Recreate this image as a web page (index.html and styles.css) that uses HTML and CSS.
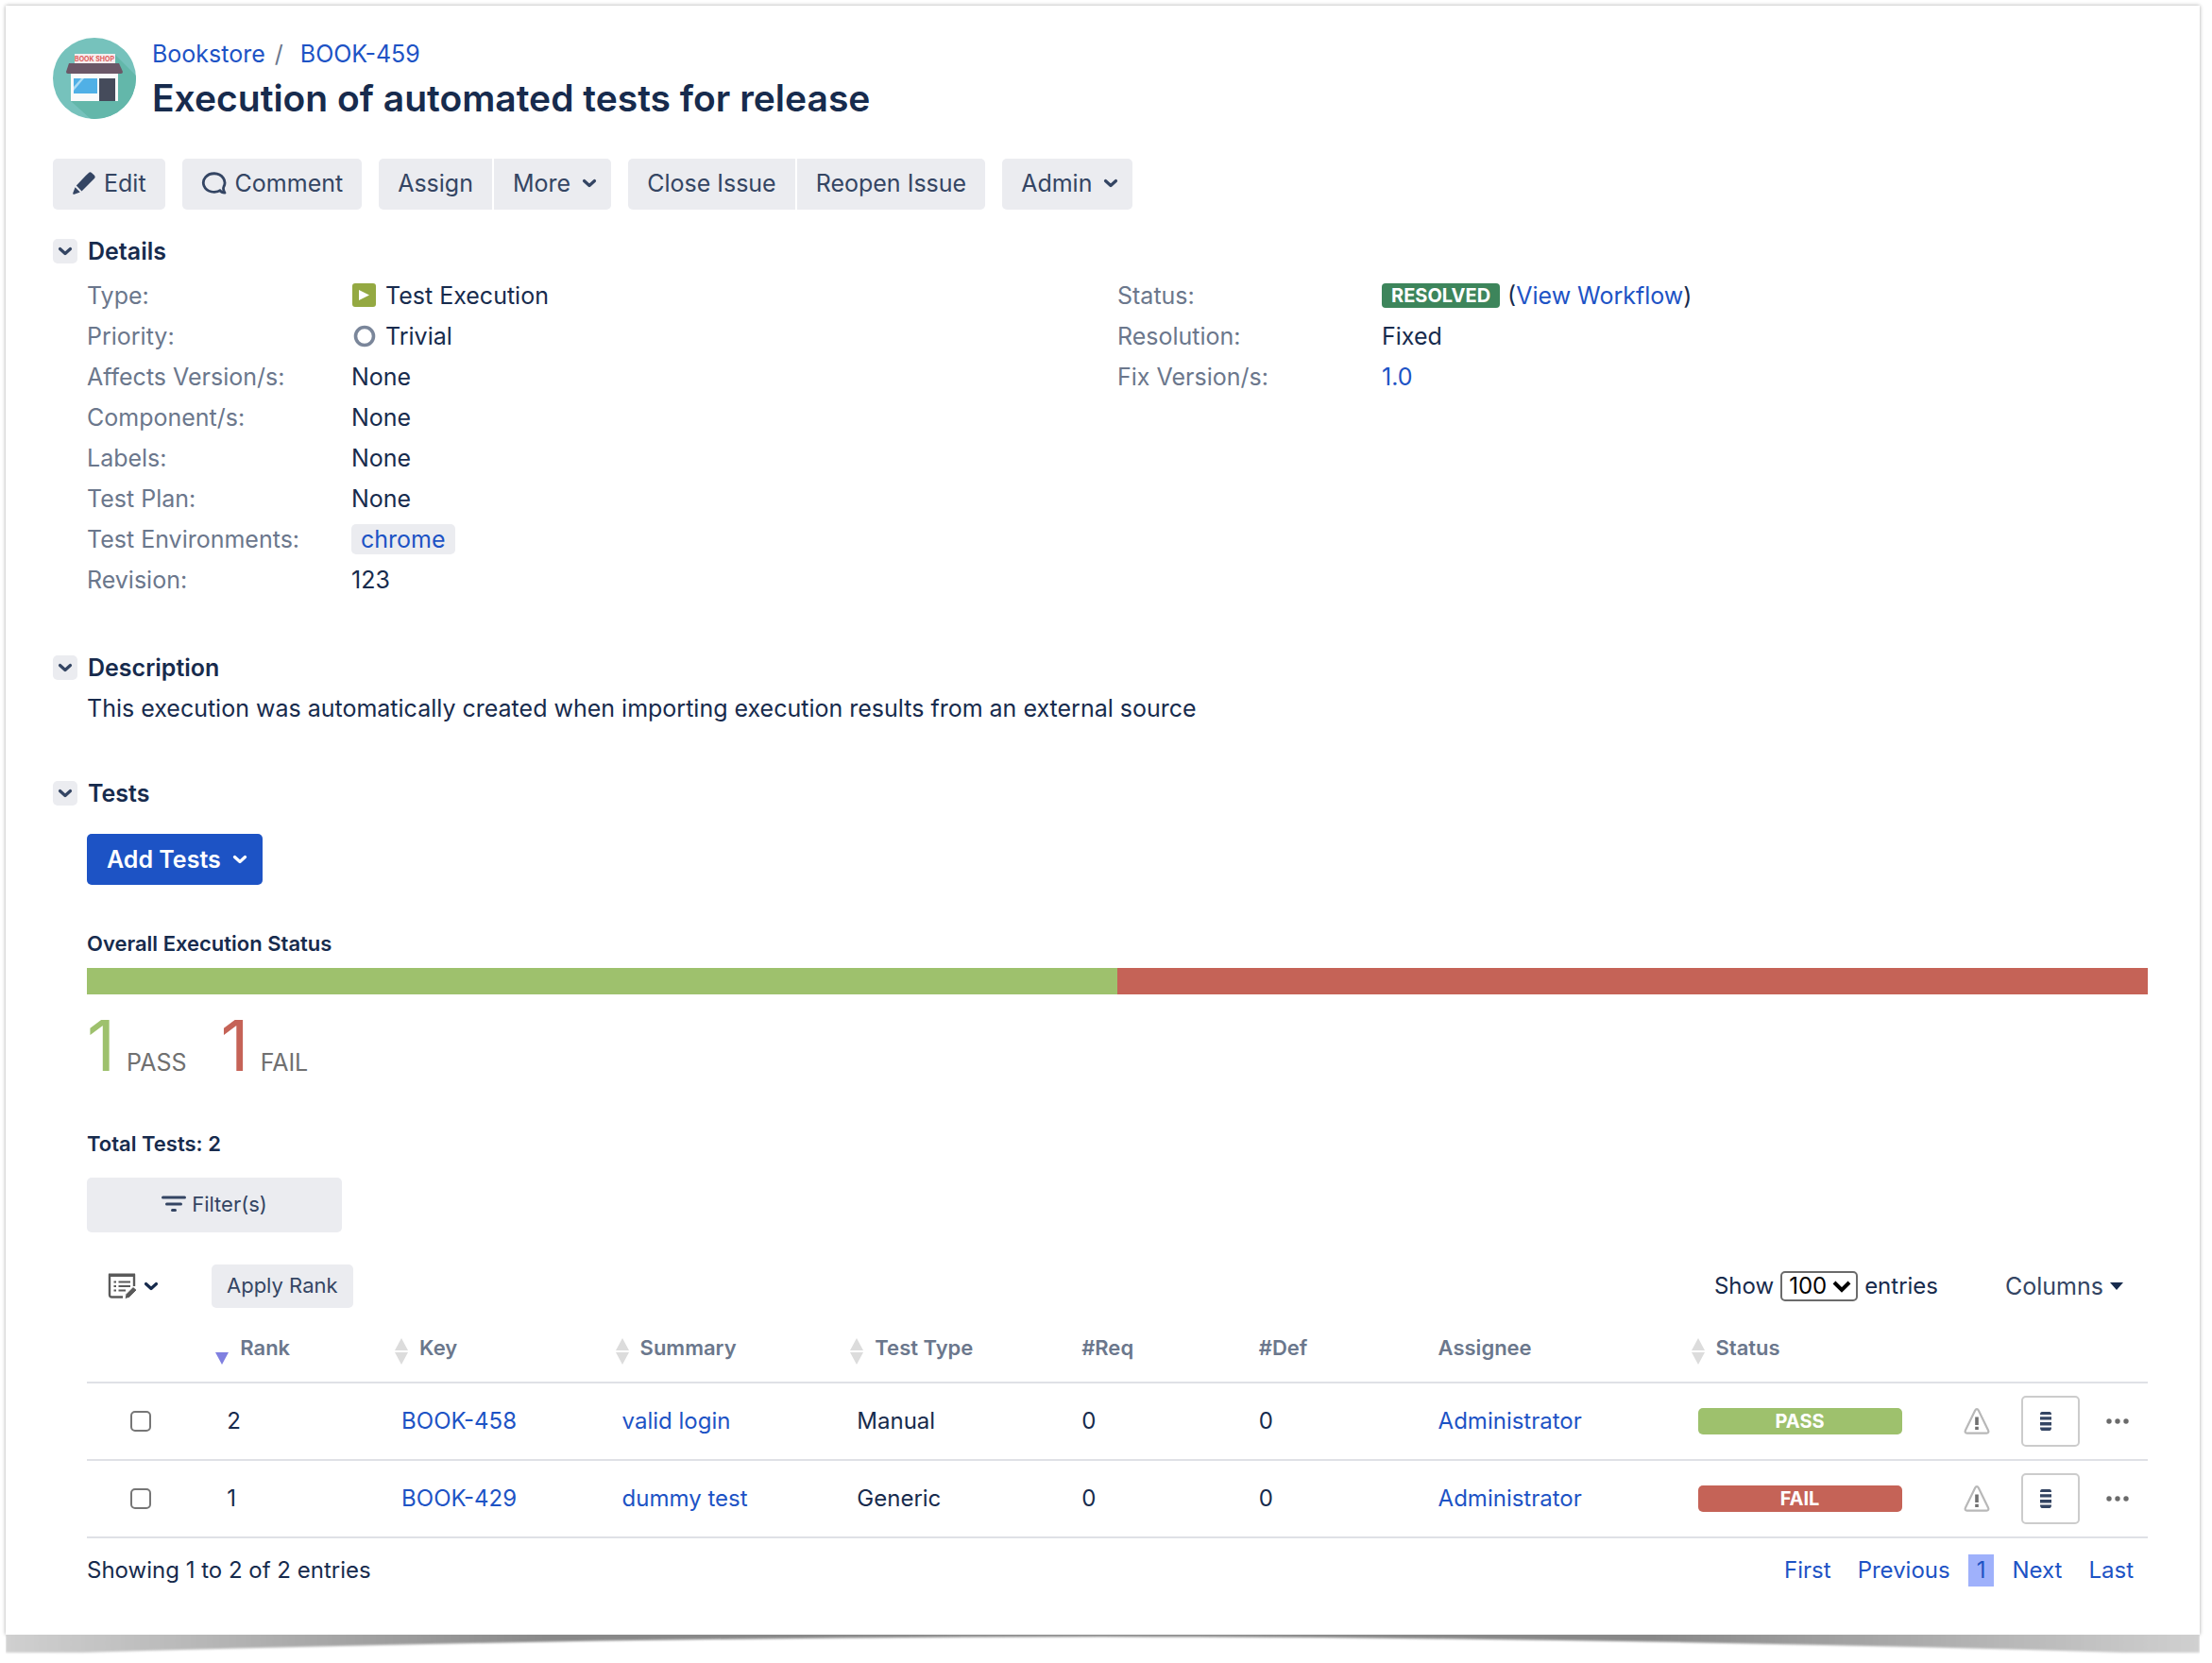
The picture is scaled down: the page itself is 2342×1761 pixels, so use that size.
FILE: index.html
```html
<!DOCTYPE html>
<html lang="en">
  <head>
    <meta charset="UTF-8" />
    <meta name="viewport" content="width=device-width, initial-scale=1.0" />
    <title>BOOK-459 Execution of automated tests for release</title>
    <link rel="stylesheet" href="styles.css">
  </head>
  <body>
    <!-- shared icons -->
    <svg class="defs" width="0" height="0" aria-hidden="true">
      <symbol id="chevron" viewBox="0 0 16 16">
        <path d="M2.5 5.5 L8 10.5 L13.5 5.5" fill="none" stroke="currentColor" stroke-width="3.2" stroke-linecap="round" stroke-linejoin="round" />
      </symbol>
      <symbol id="sort" viewBox="0 0 14 28">
        <path d="M7 0 L14 13 H0 Z M0 15 H14 L7 28 Z" fill="#dcdcdc" />
      </symbol>
      <symbol id="warning" viewBox="0 0 28 28">
        <path d="M14 1.2 C14.8 1.2 15.4 1.8 15.8 2.6 L26 23.6 C26.9 25.4 26.2 26.6 24.4 26.6 H3.6 C1.8 26.6 1.1 25.4 2 23.6 L12.2 2.6 C12.6 1.8 13.2 1.2 14 1.2 Z" fill="none" stroke="#b8b8b8" stroke-width="2.2" />
        <path d="M12.2 9.5 H15.8 V18 H12.2 Z M12.2 19.8 H15.8 V23 H12.2 Z" fill="#707070" />
      </symbol>
      <symbol id="stack" viewBox="0 0 12 22">
        <path d="M2 1 H10 Q12 1 12 4 H0 Q0 1 2 1 Z M0 6.2 H12 V9.6 H0 Z M0 12 H12 V15.4 H0 Z M0 17.6 H12 Q12 21 10 21 H2 Q0 21 0 17.6 Z" fill="#344563" />
      </symbol>
      <symbol id="dots" viewBox="0 0 24 8">
        <circle cx="3" cy="4" r="2.7" /><circle cx="12" cy="4" r="2.7" /><circle cx="21" cy="4" r="2.7" />
      </symbol>
    </svg>

    <main class="issue">
      <header class="issue-header">
        <svg class="avatar" viewBox="0 0 88 86" aria-label="Bookstore">
          <defs>
            <clipPath id="round"><ellipse cx="44" cy="43" rx="44" ry="43" /></clipPath>
          </defs>
          <g clip-path="url(#round)">
            <rect width="88" height="86" fill="#76c2bc" />
            <path d="M66 18 L88 40 V86 H40 L19 67 Z" fill="#63b7aa" />
          </g>
          <rect x="23" y="17" width="43" height="11" fill="#f6eeee" />
          <text x="44" y="25" text-anchor="middle" class="sign">BOOK SHOP</text>
          <rect x="19" y="36" width="50" height="31" fill="#fafafa" />
          <path d="M17 27 H70 L74 36 Q74 38 72 38 H16 Q14 38 14 36 Z" fill="#6b5767" />
          <rect x="22" y="43" width="25" height="16" fill="#50b0e6" />
          <path d="M22 52 L30 43 H33 L22 56 Z" fill="#a9dcf5" />
          <rect x="49" y="43" width="17" height="24" fill="#454b5b" />
        </svg>
        <div>
          <nav class="breadcrumb">
            <a href="#">Bookstore</a><span class="slash">/</span><a href="#">BOOK-459</a>
          </nav>
          <h1>Execution of automated tests for release</h1>
        </div>
      </header>

      <div class="toolbar">
        <div class="btn-group">
          <button class="btn" type="button">
            <svg width="26" height="26" viewBox="0 0 26 26"><path d="M15 4.8 L18 1.9 Q19.5 0.8 21 2 L24 4.8 Q25.4 6.3 24.2 7.8 L10.5 21.5 L4.8 15.6 Z M3.6 17.2 L8.8 22.4 L2.6 24.8 Q0.8 25.2 1.2 23.4 Z" fill="currentColor" /></svg>
            Edit
          </button>
        </div>
        <div class="btn-group">
          <button class="btn" type="button">
            <svg width="28" height="26" viewBox="0 0 28 26"><path d="M21 20 A11.3 9.8 0 1 1 24 16.5 Q22.6 19.6 25 23.2 Q21.5 23.2 19.8 20.6" fill="none" stroke="currentColor" stroke-width="2.8" stroke-linejoin="round" /></svg>
            Comment
          </button>
        </div>
        <div class="btn-group">
          <button class="btn" type="button">Assign</button>
          <button class="btn" type="button">More <svg class="chevron"><use href="#chevron" /></svg></button>
        </div>
        <div class="btn-group">
          <button class="btn" type="button">Close Issue</button>
          <button class="btn" type="button">Reopen Issue</button>
        </div>
        <div class="btn-group">
          <button class="btn" type="button">Admin <svg class="chevron"><use href="#chevron" /></svg></button>
        </div>
      </div>

      <section class="module details">
        <div class="module-title">
          <button class="toggle" type="button" aria-label="Toggle details"><svg class="chevron"><use href="#chevron" /></svg></button>
          <h2>Details</h2>
        </div>
        <div class="module-body columns">
          <dl>
            <dt>Type:</dt>
            <dd>
              <svg class="type-icon" viewBox="0 0 28 28"><rect x="1" y="1" width="25" height="25" rx="3" fill="#94a942" /><path d="M8 8 L19 13.5 L8 19 Z" fill="#fff" /></svg>
              Test Execution
            </dd>
            <dt>Priority:</dt>
            <dd>
              <svg class="type-icon" viewBox="0 0 28 28"><circle cx="14" cy="14" r="9.5" fill="none" stroke="#7a869a" stroke-width="3.6" /></svg>
              Trivial
            </dd>
            <dt>Affects Version/s:</dt>
            <dd>None</dd>
            <dt>Component/s:</dt>
            <dd>None</dd>
            <dt>Labels:</dt>
            <dd>None</dd>
            <dt>Test Plan:</dt>
            <dd>None</dd>
            <dt>Test Environments:</dt>
            <dd><a class="tag" href="#">chrome</a></dd>
            <dt>Revision:</dt>
            <dd>123</dd>
          </dl>
          <dl>
            <dt>Status:</dt>
            <dd><span class="lozenge">RESOLVED</span><span>(<a href="#">View Workflow</a>)</span></dd>
            <dt>Resolution:</dt>
            <dd>Fixed</dd>
            <dt>Fix Version/s:</dt>
            <dd><a href="#">1.0</a></dd>
          </dl>
        </div>
      </section>

      <section class="module">
        <div class="module-title">
          <button class="toggle" type="button" aria-label="Toggle description"><svg class="chevron"><use href="#chevron" /></svg></button>
          <h2>Description</h2>
        </div>
        <p class="module-body">This execution was automatically created when importing execution results from an external source</p>
      </section>

      <section class="module">
        <div class="module-title">
          <button class="toggle" type="button" aria-label="Toggle tests"><svg class="chevron"><use href="#chevron" /></svg></button>
          <h2>Tests</h2>
        </div>
        <div class="module-body tests">
          <button class="btn primary" type="button">Add Tests <svg class="chevron"><use href="#chevron" /></svg></button>

          <h3>Overall Execution Status</h3>
          <div class="progress">
            <div class="pass" style="width: 50%"></div>
            <div class="fail" style="width: 50%"></div>
          </div>
          <div class="counts">
            <div><span class="number pass-text">1</span>PASS</div>
            <div><span class="number fail-text">1</span>FAIL</div>
          </div>

          <h3 class="total">Total Tests: 2</h3>
          <button class="btn filter" type="button">
            <svg width="26" height="18" viewBox="0 0 26 18"><path d="M1.5 2 H24.5 M5.5 9 H20.5 M11.5 15.5 H14.5" fill="none" stroke="currentColor" stroke-width="3" stroke-linecap="round" /></svg>
            Filter(s)
          </button>

          <div class="table-tools">
            <button class="bulk" type="button" aria-label="Bulk actions">
              <svg width="32" height="30" viewBox="0 0 32 30">
                <path d="M16 26.5 H4.5 Q2 26.5 2 24 V3.5 H28 V15" fill="none" stroke="#5a5a5a" stroke-width="2.4" />
                <path d="M1 1.5 H29 V5 H1 Z" fill="#5a5a5a" />
                <path d="M6.5 10.5 H9 M11.5 10.5 H24 M6.5 15 H9 M11.5 15 H24 M6.5 19.5 H9 M11.5 19.5 H19" stroke="#5a5a5a" stroke-width="2" />
                <path d="M18 28.8 L19 23.5 L27 15.5 L31 19 L22.8 27.2 Z" fill="#5a5a5a" stroke="#fff" stroke-width="1" />
              </svg>
              <svg class="chevron"><use href="#chevron" /></svg>
            </button>
            <button class="btn small" type="button">Apply Rank</button>
            <div class="length">
              <label for="entries">Show</label>
              <span class="select">
                <select id="entries">
                  <option>100</option>
                </select>
                <svg viewBox="0 0 20 16"><path d="M2 4 L10 12 L18 4" fill="none" stroke="#000" stroke-width="4" /></svg>
              </span>
              <span>entries</span>
            </div>
            <button class="columns-btn" type="button">Columns <svg width="14" height="8" viewBox="0 0 14 8"><path d="M0 0 H14 L7 8 Z" fill="#172b4d" /></svg></button>
          </div>

          <table>
            <colgroup>
              <col class="c-check"><col class="c-rank"><col class="c-key"><col class="c-summary"><col class="c-type"><col class="c-req"><col class="c-def"><col class="c-assignee"><col class="c-status"><col class="c-warn"><col class="c-open"><col>
            </colgroup>
            <thead>
              <tr>
                <th></th>
                <th class="sortable"><svg class="sort" viewBox="0 0 14 28"><path d="M0 15 H14 L7 28 Z" fill="#8080e0" /></svg>Rank</th>
                <th class="sortable"><svg class="sort"><use href="#sort" /></svg>Key</th>
                <th class="sortable"><svg class="sort"><use href="#sort" /></svg>Summary</th>
                <th class="sortable"><svg class="sort"><use href="#sort" /></svg>Test Type</th>
                <th>#Req</th>
                <th>#Def</th>
                <th>Assignee</th>
                <th class="sortable"><svg class="sort"><use href="#sort" /></svg>Status</th>
                <th></th>
                <th></th>
                <th></th>
              </tr>
            </thead>
            <tbody>
              <tr>
                <td class="check"><input type="checkbox" aria-label="Select BOOK-458" /></td>
                <td class="rank">2</td>
                <td><a href="#">BOOK-458</a></td>
                <td><a href="#">valid login</a></td>
                <td>Manual</td>
                <td>0</td>
                <td>0</td>
                <td><a href="#">Administrator</a></td>
                <td><span class="status pass">PASS</span></td>
                <td><svg class="warning"><use href="#warning" /></svg></td>
                <td><button class="open" type="button" aria-label="Execute BOOK-458"><svg width="12" height="22"><use href="#stack" /></svg></button></td>
                <td><button class="dots" type="button" aria-label="More actions"><svg width="24" height="8"><use href="#dots" /></svg></button></td>
              </tr>
              <tr>
                <td class="check"><input type="checkbox" aria-label="Select BOOK-429" /></td>
                <td class="rank">1</td>
                <td><a href="#">BOOK-429</a></td>
                <td><a href="#">dummy test</a></td>
                <td>Generic</td>
                <td>0</td>
                <td>0</td>
                <td><a href="#">Administrator</a></td>
                <td><span class="status fail">FAIL</span></td>
                <td><svg class="warning"><use href="#warning" /></svg></td>
                <td><button class="open" type="button" aria-label="Execute BOOK-429"><svg width="12" height="22"><use href="#stack" /></svg></button></td>
                <td><button class="dots" type="button" aria-label="More actions"><svg width="24" height="8"><use href="#dots" /></svg></button></td>
              </tr>
            </tbody>
          </table>

          <div class="table-footer">
            <span>Showing 1 to 2 of 2 entries</span>
            <nav class="pages">
              <a href="#">First</a>
              <a href="#">Previous</a>
              <a class="current" href="#">1</a>
              <a href="#">Next</a>
              <a href="#">Last</a>
            </nav>
          </div>
        </div>
      </section>
    </main>

    <!-- lifted paper edge under the page -->
    <svg class="edge" viewBox="0 0 2326 28" preserveAspectRatio="none" aria-hidden="true">
      <defs>
        <linearGradient id="shade">
          <stop offset="0" stop-color="#d0d0d0" />
          <stop offset="0.1" stop-color="#b4b4b4" />
          <stop offset="0.25" stop-color="#888" />
          <stop offset="0.75" stop-color="#888" />
          <stop offset="0.9" stop-color="#b4b4b4" />
          <stop offset="1" stop-color="#d0d0d0" />
        </linearGradient>
        <filter id="soft" x="-1%" y="-50%" width="102%" height="200%"><feGaussianBlur stdDeviation="1.2" /></filter>
      </defs>
      <path d="M0 -10 H2326 V19 H2246 Q1700 3 1163 2 Q626 3 80 19 H0 Z" fill="url(#shade)" filter="url(#soft)" />
    </svg>
  </body>
</html>
```
FILE: styles.css
```css
* {
  box-sizing: border-box;
}
body {
  margin: 0;
  padding: 6px 13px 0 6px;
  background: #fff;
  color: #172b4d;
  font-family: Inter, "Liberation Sans", sans-serif;
  font-size: 25px;
  line-height: 36px;
}
a {
  color: #1d53c5;
  text-decoration: none;
}
h1,
h2,
h3,
p,
dl,
dd {
  margin: 0;
}
button {
  font: inherit;
  color: inherit;
  background: none;
  border: none;
  padding: 0;
  cursor: pointer;
}
.defs {
  position: absolute;
}
.issue {
  background: #fff;
  padding: 34px 55px 50px 50px;
  box-shadow: 0 0 4px rgba(0, 0, 0, 0.35);
}

/* header */
.issue-header {
  display: flex;
  gap: 17px;
}
.avatar {
  width: 88px;
  height: 86px;
}
.sign {
  font-size: 7px;
  font-weight: 700;
  fill: #e05a5a;
}
.breadcrumb {
  line-height: 34px;
}
.slash {
  color: #6b778c;
  margin: 0 18px 0 10px;
}
h1 {
  font-size: 39px;
  font-weight: 600;
  line-height: 60px;
}

/* buttons */
.toolbar {
  display: flex;
  gap: 18px;
  margin-top: 34px;
}
.btn-group {
  display: flex;
  gap: 2px;
}
.btn {
  display: flex;
  align-items: center;
  justify-content: center;
  gap: 8px;
  height: 54px;
  padding: 0 20px 3px;
  border-radius: 5px;
  background: #ebecf0;
  color: #344563;
}
.btn-group .btn:first-child {
  border-radius: 5px 0 0 5px;
}
.btn-group .btn:last-child {
  border-radius: 0 5px 5px 0;
}
.btn-group .btn:only-child {
  border-radius: 5px;
}
.chevron {
  width: 16px;
  height: 16px;
}
.btn .chevron {
  margin-left: 4px;
  margin-right: -5px;
}
.btn.primary {
  padding: 0 21px;
  background: #1d53c5;
  color: #fff;
  font-weight: 600;
}

/* sections */
.module {
  margin-top: 53px;
}
.module.details {
  margin-top: 25px;
}
.module-title {
  display: flex;
  align-items: center;
  gap: 11px;
  height: 38px;
}
.toggle {
  display: flex;
  align-items: center;
  justify-content: center;
  width: 26px;
  height: 26px;
  border-radius: 5px;
  background: #ebecf0;
  color: #344563;
}
h2 {
  font-size: 25px;
  font-weight: 600;
}
.module-body {
  margin-left: 36px;
  padding-top: 6px;
}
.columns {
  display: grid;
  grid-template-columns: 1fr 1fr;
  align-items: start;
}
dl {
  display: grid;
  grid-template-columns: 280px 1fr;
  grid-auto-rows: 43px;
  align-items: center;
}
dt {
  color: #6b778c;
}
dd {
  display: flex;
  align-items: center;
  gap: 8px;
}
.type-icon {
  width: 28px;
  height: 28px;
}
.tag {
  background: #ebecf0;
  border-radius: 5px;
  padding: 0 10px;
  line-height: 32px;
}
.lozenge {
  background: #3d855b;
  color: #fff;
  border-radius: 4px;
  padding: 0 10px;
  font-size: 20px;
  font-weight: 700;
  line-height: 26px;
}

/* tests */
.tests {
  padding-top: 24px;
}
h3 {
  font-size: 22px;
  font-weight: 600;
  line-height: 32px;
  margin-top: 46px;
}
.progress {
  display: flex;
  height: 28px;
  margin-top: 10px;
}
.pass {
  background: #9ec16d;
}
.fail {
  background: #c56357;
}
.counts {
  display: flex;
  gap: 36px;
  color: #707070;
  line-height: 108px;
}
.number {
  font-size: 74px;
  font-weight: 400;
  margin-right: 12px;
}
.pass-text {
  color: #9ec16d;
}
.fail-text {
  color: #c56357;
}
.total {
  margin-top: 16px;
}
.filter {
  width: 270px;
  height: 58px;
  margin-top: 20px;
  gap: 6px;
  font-size: 22px;
}
.table-tools {
  display: flex;
  align-items: center;
  margin-top: 34px;
  padding: 0 26px 0 22px;
  font-size: 24px;
}
.bulk {
  display: flex;
  align-items: center;
  gap: 6px;
  margin-right: 56px;
  color: #172b4d;
}
.btn.small {
  height: 46px;
  padding: 0 16px 2px;
  font-size: 22px;
}
.length {
  display: flex;
  align-items: center;
  gap: 7px;
  margin-left: auto;
}
.select {
  position: relative;
}
select {
  appearance: none;
  display: block;
  width: 82px;
  height: 32px;
  padding: 0 0 0 7px;
  border: 2px solid #6b6b6b;
  border-radius: 5px;
  background: #fff;
  color: #000;
  font: inherit;
  line-height: 28px;
}
.select svg {
  position: absolute;
  top: 8px;
  right: 7px;
  width: 20px;
  height: 16px;
  pointer-events: none;
}
.columns-btn {
  display: flex;
  align-items: center;
  gap: 7px;
  margin-left: 71px;
  color: #344563;
  font-size: 25px;
}

table {
  width: 100%;
  table-layout: fixed;
  border-collapse: collapse;
  font-size: 24px;
}
.c-check { width: 6.2%; }
.c-rank { width: 8.7%; }
.c-key { width: 10.7%; }
.c-summary { width: 11.4%; }
.c-type { width: 10.9%; }
.c-req { width: 8.6%; }
.c-def { width: 8.7%; }
.c-assignee { width: 12.6%; }
.c-status { width: 12.9%; }
.c-warn { width: 2.8%; }
.c-open { width: 4.1%; }
th,
td {
  padding: 0 0 0 8px;
  text-align: left;
  border-bottom: 2px solid #dfe1e6;
}
th {
  height: 79px;
  padding-top: 6px;
  color: #6b778c;
  font-size: 22px;
  font-weight: 600;
}
th.sortable {
  padding-left: 1px;
}
.sort {
  width: 14px;
  height: 28px;
  margin: 0 12px -10px 0;
}
td {
  height: 82px;
}
td svg {
  display: block;
}
td.check {
  padding-left: 46px;
}
td.rank {
  padding-left: 13px;
}
input[type="checkbox"] {
  appearance: none;
  display: block;
  width: 22px;
  height: 22px;
  margin: 0;
  border: 2px solid #767676;
  border-radius: 5px;
  background: #fff;
}
.status {
  display: block;
  width: 216px;
  border-radius: 5px;
  color: #fff;
  font-size: 20px;
  font-weight: 700;
  line-height: 28px;
  text-align: center;
}
.warning {
  width: 28px;
  height: 28px;
}
.open {
  display: flex;
  align-items: center;
  width: 62px;
  height: 54px;
  padding-left: 18px;
  border: 2px solid #ccc;
  border-radius: 5px;
}
.dots {
  display: block;
  fill: #6a6a6a;
}
.table-footer {
  display: flex;
  justify-content: space-between;
  align-items: center;
  padding-top: 16px;
  font-size: 24px;
}
.pages {
  display: flex;
  gap: 10px;
  margin-right: 6px;
}
.pages a {
  padding: 0 9px;
  line-height: 34px;
}
.pages .current {
  background: #9fb1fb;
}
.edge {
  display: block;
  width: 100%;
  height: 28px;
}
```
